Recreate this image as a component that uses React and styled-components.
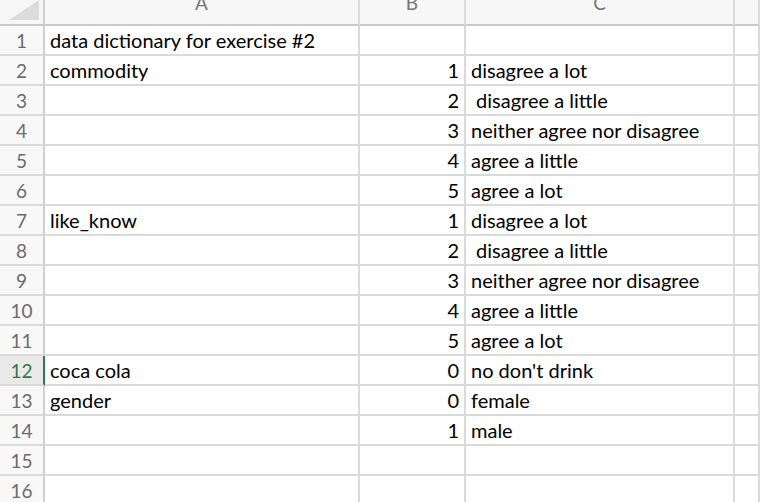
import React from 'react'
import styled, { createGlobalStyle } from 'styled-components'

const Global = createGlobalStyle`
body {
  margin: 0;
  background: #ffffff;
  overflow: hidden;
}
`

const Sheet = styled.div`
display: grid;
grid-template-columns: 45px 315px 106px 269px 1fr;
grid-template-rows: 26px;
grid-auto-rows: 30px;
width: 760px;
height: 502px;
overflow: hidden;
font-family: Lato, "Liberation Sans", sans-serif;
font-size: 20px;
color: #000;
`

const Corner = styled.div`
position: relative;
background: #f6f6f6;
border-right: 2px solid #d0d0d0;
border-bottom: 2px solid #c9c9c9;
box-sizing: border-box;
overflow: hidden;
`

const Triangle = styled.div`
position: absolute;
right: 4px;
bottom: 4px;
width: 0;
height: 0;
border-left: 30px solid transparent;
border-bottom: 20px solid #dcdcdc;
`

const ColHead = styled.div`
background: #f7f7f7;
border-right: 2px solid #dcdcdc;
border-bottom: 2px solid #c9c9c9;
box-sizing: border-box;
display: flex;
align-items: flex-end;
justify-content: center;
color: #777;
font-size: 19px;
line-height: 19px;
overflow: hidden;
span { transform: translateY(-12px); }
`

const RowHead = styled.div`
background: ${p => (p.active ? '#e9e9e9' : '#f8f8f8')};
color: ${p => (p.active ? '#2b7a4b' : '#6b6b6b')};
border-right: 2px solid ${p => (p.active ? '#2e7650' : '#d0d0d0')};
border-bottom: 2px solid #dadada;
box-sizing: border-box;
display: flex;
align-items: center;
justify-content: center;
font-size: 19px;
`

const Cell = styled.div`
border-right: 2px solid #dadada;
border-bottom: 2px solid #dadada;
box-sizing: border-box;
display: flex;
align-items: center;
justify-content: ${p => (p.num ? 'flex-end' : 'flex-start')};
padding: ${p => (p.num ? '0 5px 0 0' : '0 0 0 5px')};
white-space: pre;
overflow: visible;
`

const rows = [
  ['data dictionary for exercise #2', '', ''],
  ['commodity', '1', 'disagree a lot'],
  ['', '2', ' disagree a little'],
  ['', '3', 'neither agree nor disagree'],
  ['', '4', 'agree a little'],
  ['', '5', 'agree a lot'],
  ['like_know', '1', 'disagree a lot'],
  ['', '2', ' disagree a little'],
  ['', '3', 'neither agree nor disagree'],
  ['', '4', 'agree a little'],
  ['', '5', 'agree a lot'],
  ['coca cola', '0', "no don't drink"],
  ['gender', '0', 'female'],
  ['', '1', 'male'],
  ['', '', ''],
  ['', '', ''],
]

export default function App() {
  return (
    <>
      <Global />
      <Sheet>
        <Corner><Triangle /></Corner>
        <ColHead><span>A</span></ColHead>
        <ColHead><span>B</span></ColHead>
        <ColHead><span>C</span></ColHead>
        <ColHead />
        {rows.map((r, i) => (
          <React.Fragment key={i}>
            <RowHead active={i === 11}>{i + 1}</RowHead>
            <Cell>{r[0]}</Cell>
            <Cell num>{r[1]}</Cell>
            <Cell>{r[2]}</Cell>
            <Cell />
          </React.Fragment>
        ))}
      </Sheet>
    </>
  )
}
